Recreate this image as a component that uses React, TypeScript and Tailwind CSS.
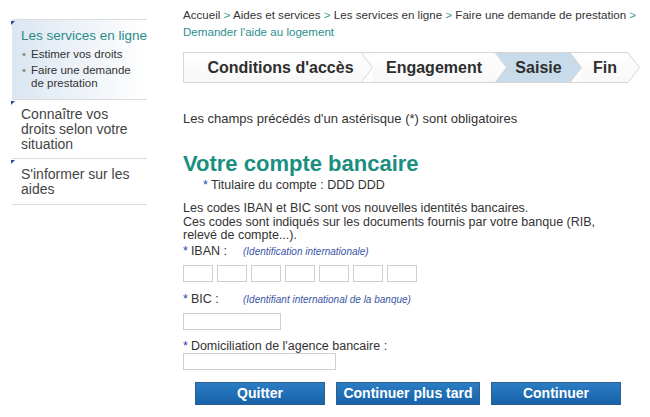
import { Fragment } from 'react'

const font = { fontFamily: '"Liberation Sans", Arial, sans-serif' }

const steps = [
    { label: "Conditions d'accès", width: 'w-[178px] pl-[16px]', active: false },
    { label: 'Engagement', width: 'w-[122px]', active: false },
    { label: 'Saisie', width: 'w-[63px]', active: true },
    { label: 'Fin', width: 'w-[46px]', active: false },
]

const Chevron = ({ left, right, last }: { left: string; right: string; last?: boolean }) => (
    <svg width="12" height="31" viewBox="0 0 12 31" className="shrink-0 block">
        {!last && <rect x="0" y="0" width="12" height="31" fill={right} />}
        <polygon points="0,0.5 11.5,15.5 0,30.5" fill={left} />
        <polyline points="0,0.5 11.5,15.5 0,30.5" fill="none" stroke="#d6d6d6" strokeWidth="1" />
        {!last && <line x1="0" y1="0.5" x2="12" y2="0.5" stroke="#d6d6d6" />}
        {!last && <line x1="0" y1="30.5" x2="12" y2="30.5" stroke="#d6d6d6" />}
    </svg>
)

const Corner = () => (
    <span className="absolute left-[-1px] top-[1px] w-0 h-0 border-t-[4px] border-r-[4px] border-t-[#1d4e99] border-r-transparent" />
)

const Sidebar = () => (
    <aside className="w-[135px] ml-[12px] mt-[19px] shrink-0">
        {/* Active section */}
        <div className="relative border-t border-[#dcdcdc] bg-gradient-to-r from-[#dbe6f1] to-white pb-[8px]">
            <Corner />
            <p className="pl-[9px] pt-[7px] text-[13.5px] text-[#2b8a8a] leading-[18px] whitespace-nowrap">Les services en ligne</p>
            <ul className="pl-[10px] mt-[1px] text-[11.5px] text-[#333] leading-[13px]">
                <li className="flex gap-[5px] py-[1.5px]"><span className="text-[#888]">•</span>Estimer vos droits</li>
                <li className="flex gap-[5px] py-[1.5px]"><span className="text-[#888]">•</span><span>Faire une demande<br />de prestation</span></li>
            </ul>
        </div>
        <div className="relative border-t border-[#dcdcdc] pt-[7px] pb-[6px]">
            <Corner />
            <p className="pl-[9px] text-[14px] text-[#444] leading-[15px]">Connaître vos<br />droits selon votre<br />situation</p>
        </div>
        <div className="relative border-t border-[#dcdcdc] pt-[8px] pb-[7px]">
            <Corner />
            <p className="pl-[9px] text-[14px] text-[#444] leading-[15px]">S'informer sur les<br />aides</p>
        </div>
        <div className="border-t border-[#dcdcdc]" />
    </aside>
)

const Stepper = () => (
    <div className="flex mt-[12px] h-[31px]">
        {steps.map((s, i) => {
            const bg = s.active ? '#c8dbeb' : '#fbfbfb'
            const next = steps[i + 1]
            const nextBg = next ? (next.active ? '#c8dbeb' : '#fdfdfd') : '#ffffff'
            return (
                <Fragment key={s.label}>
                    <div
                        className={`${s.width} shrink-0 h-[31px] flex items-center justify-center border-y border-[#d6d6d6] text-[16px] font-bold text-[#2e2e2e] whitespace-nowrap ${i === 0 ? 'border-l' : ''} ${s.active ? 'bg-[#c8dbeb]' : 'bg-gradient-to-b from-white to-[#f7f7f7]'}`}
                    >
                        {s.label}
                    </div>
                    <Chevron left={bg} right={nextBg} last={!next} />
                </Fragment>
            )
        })}
    </div>
)

const Star = () => <span className="text-[#2447b8] mr-[3px]">*</span>

const Sep = () => <span className="text-[#3a9a9a]">&gt;</span>

const App = () => {
    return (
        <div className="w-[650px] h-[417px] bg-white flex overflow-hidden" style={font}>
            <Sidebar />
            <main className="ml-[36px] pt-[6px] text-[#333] w-[465px] shrink-0">
                {/* Breadcrumb */}
                <nav className="text-[11.6px] leading-[17px] text-[#333]">
                    <div className="whitespace-nowrap">
                        Accueil <Sep /> Aides et services <Sep /> Les services en ligne <Sep /> Faire une demande de prestation <Sep />
                    </div>
                    <div className="text-[#2b8f8f]">Demander l'aide au logement</div>
                </nav>

                <Stepper />

                <p className="mt-[28px] text-[13px] leading-[16px]">Les champs précédés d'un astérisque (*) sont obligatoires</p>

                <h2 className="mt-[25px] text-[22px] leading-[24px] font-bold text-[#1a8f80]">Votre compte bancaire</h2>
                <p className="ml-[20px] mt-[2px] text-[12.5px] leading-[15px]"><Star />Titulaire du compte : DDD DDD</p>

                <p className="mt-[9px] w-[430px] text-[12.5px] leading-[13.5px]">
                    Les codes IBAN et BIC sont vos nouvelles identités bancaires.<br />
                    Ces codes sont indiqués sur les documents fournis par votre banque (RIB, relevé de compte...).
                </p>

                <div className="mt-[1px] flex items-baseline text-[12.5px] leading-[15px]">
                    <span className="w-[60px]"><Star />IBAN :</span>
                    <span className="italic text-[10px] text-[#3a55a8]">(Identification internationale)</span>
                </div>
                <div className="mt-[6px] flex gap-[4px]">
                    {[0, 1, 2, 3, 4, 5, 6].map(i => (
                        <input key={i} className="w-[30px] h-[17px] border border-[#cfcfcf] bg-white outline-none" />
                    ))}
                </div>

                <div className="mt-[9px] flex items-baseline text-[12.5px] leading-[16px]">
                    <span className="w-[60px]"><Star />BIC :</span>
                    <span className="italic text-[10px] text-[#3a55a8]">(Identifiant international de la banque)</span>
                </div>
                <input className="mt-[5px] block w-[98px] h-[17px] border border-[#cfcfcf] bg-white outline-none" />

                <p className="mt-[9px] text-[12.5px] leading-[14px]"><Star />Domiciliation de l'agence bancaire :</p>
                <input className="mt-0 block w-[153px] h-[17px] border border-[#cfcfcf] bg-white outline-none" />

                <div className="mt-[12px] ml-[12px] flex gap-[11px]">
                    {['Quitter', 'Continuer plus tard', 'Continuer'].map(b => (
                        <button
                            key={b}
                            className={`${b === 'Continuer plus tard' ? 'w-[144px]' : 'w-[130px]'} h-[23px] bg-gradient-to-b from-[#2b7dc4] to-[#1862a8] border border-[#2f5f8f] text-white font-bold text-[14px] leading-[20px]`}
                        >
                            {b}
                        </button>
                    ))}
                </div>
            </main>
        </div>
    )
}

export default App
